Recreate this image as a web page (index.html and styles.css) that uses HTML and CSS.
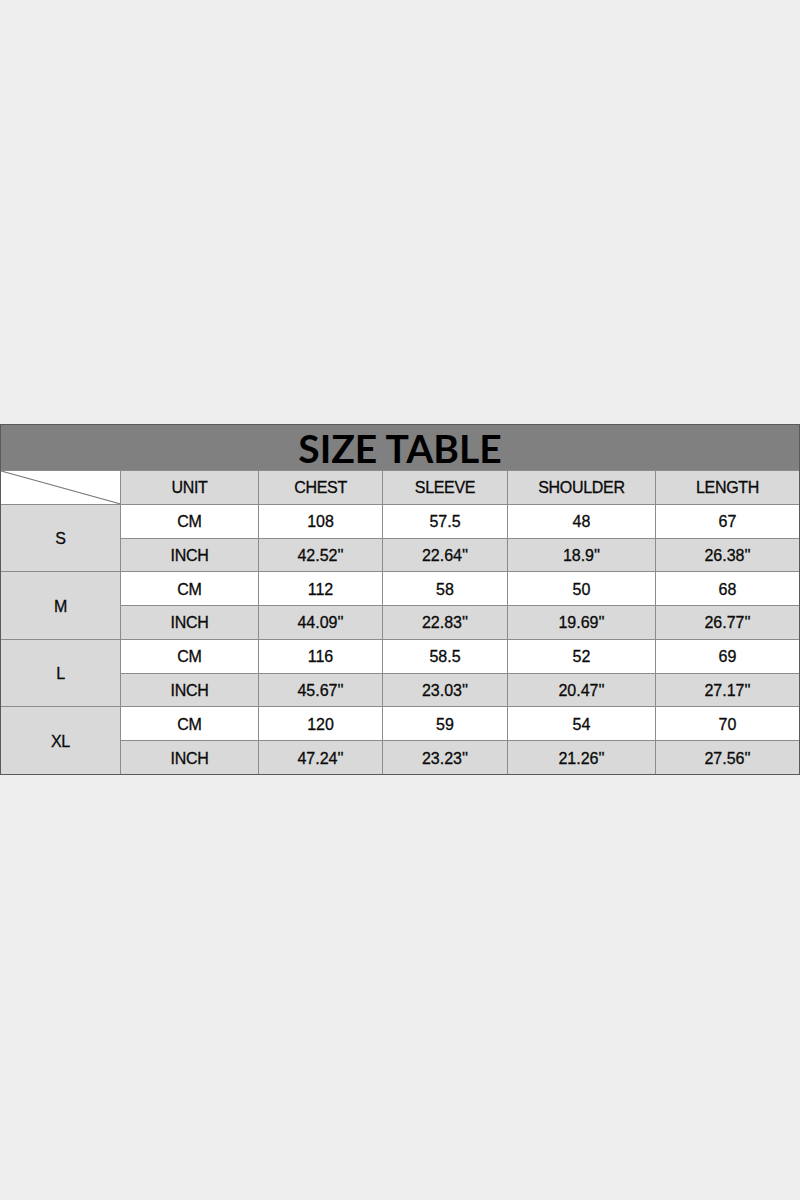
FILE: index.html
```html
<!DOCTYPE html>
<html>
<head>
<meta charset="utf-8">
<link rel="stylesheet" href="styles.css">
</head>
<body>
<div class="page">
  <div class="sheet">
    <div class="title">SIZE TABLE</div>
    <div class="corner"><svg class="diag" viewBox="0 0 100 100" preserveAspectRatio="none"><line x1="0" y1="0" x2="100" y2="100" stroke="#7a7a7a" stroke-width="1.2" vector-effect="non-scaling-stroke"/></svg></div>
    <div class="cell head">UNIT</div>
    <div class="cell head">CHEST</div>
    <div class="cell head">SLEEVE</div>
    <div class="cell head">SHOULDER</div>
    <div class="cell head">LENGTH</div>

    <div class="cell size">S</div>
    <div class="cell w">CM</div><div class="cell w num">108</div><div class="cell w num">57.5</div><div class="cell w num">48</div><div class="cell w num">67</div>
    <div class="cell g">INCH</div><div class="cell g num">42.52''</div><div class="cell g num">22.64''</div><div class="cell g num">18.9''</div><div class="cell g num">26.38''</div>

    <div class="cell size">M</div>
    <div class="cell w">CM</div><div class="cell w num">112</div><div class="cell w num">58</div><div class="cell w num">50</div><div class="cell w num">68</div>
    <div class="cell g">INCH</div><div class="cell g num">44.09''</div><div class="cell g num">22.83''</div><div class="cell g num">19.69''</div><div class="cell g num">26.77''</div>

    <div class="cell size">L</div>
    <div class="cell w">CM</div><div class="cell w num">116</div><div class="cell w num">58.5</div><div class="cell w num">52</div><div class="cell w num">69</div>
    <div class="cell g">INCH</div><div class="cell g num">45.67''</div><div class="cell g num">23.03''</div><div class="cell g num">20.47''</div><div class="cell g num">27.17''</div>

    <div class="cell size">XL</div>
    <div class="cell w">CM</div><div class="cell w num">120</div><div class="cell w num">59</div><div class="cell w num">54</div><div class="cell w num">70</div>
    <div class="cell g">INCH</div><div class="cell g num">47.24''</div><div class="cell g num">23.23''</div><div class="cell g num">21.26''</div><div class="cell g num">27.56''</div>
  </div>
</div>
</body>
</html>
```
FILE: styles.css
```css
html, body {
  margin: 0;
  padding: 0;
  background: #eeeeee;
}
.page {
  width: 800px;
  height: 1200px;
  padding-top: 424px;
  box-sizing: border-box;
}
.sheet {
  box-sizing: border-box;
  width: 800px;
  height: 351px;
  border: 1px solid #5a5a5a;
  background: #8c8c8c;
  display: grid;
  grid-template-columns: 119px 137px 123px 124px 147px 1fr;
  grid-template-rows: 45px repeat(9, 1fr);
  gap: 1px;
  font-family: "Liberation Sans", Arial, sans-serif;
  font-size: 16px;
  letter-spacing: -0.3px;
  color: #0a0a0a;
  -webkit-text-stroke: 0.3px #0a0a0a;
}
.title {
  grid-column: 1 / -1;
  background: #808080;
  color: #000;
  font-family: Lato, "Open Sans", sans-serif;
  font-weight: 700;
  font-size: 39px;
  letter-spacing: 0;
  -webkit-text-stroke: 0;
  line-height: 1;
  display: flex;
  align-items: flex-end;
  justify-content: center;
  padding-bottom: 2px;
}
.corner {
  background: #ffffff;
  position: relative;
}
.diag {
  position: absolute;
  inset: 0;
  width: 100%;
  height: 100%;
}
.cell {
  display: flex;
  align-items: center;
  justify-content: center;
  padding-top: 2px;
}
.num {
  letter-spacing: 0;
}
.head {
  background: #d9d9d9;
}
.size {
  grid-column: 1;
  grid-row: span 2;
  background: #d9d9d9;
}
.w {
  background: #ffffff;
}
.g {
  background: #d9d9d9;
}
```
